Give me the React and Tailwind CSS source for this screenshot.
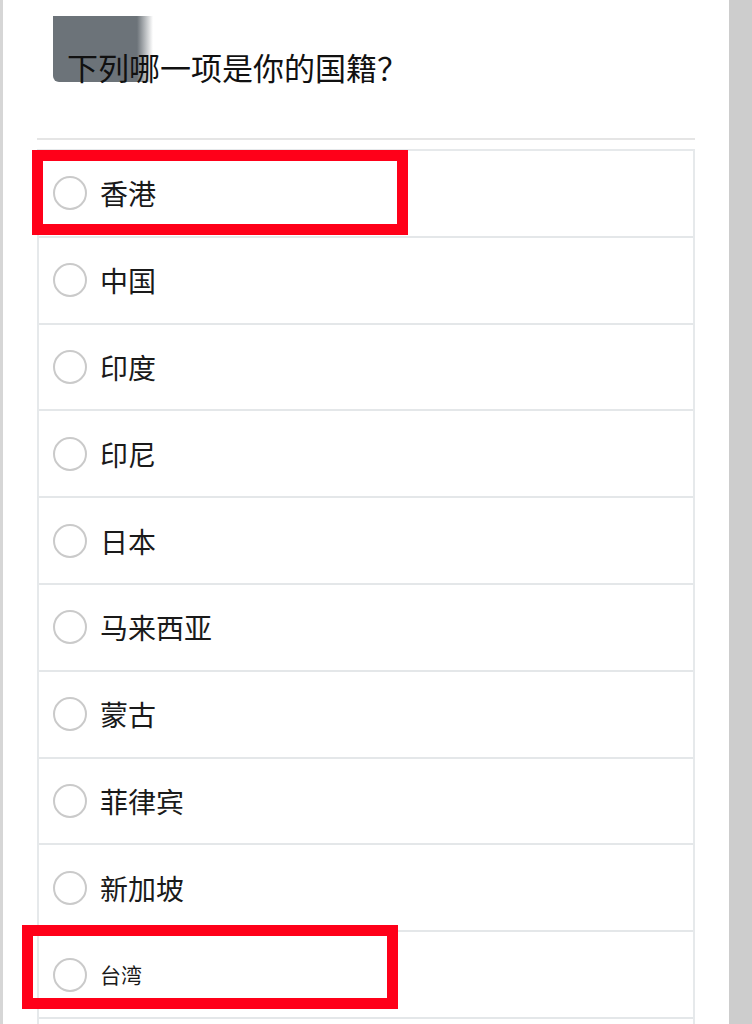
const options = ['香港', '中国', '印度', '印尼', '日本', '马来西亚', '蒙古', '菲律宾', '新加坡', '台湾', ''];

function Row({ label, small }) {
    return (
        <div className="box-border flex h-[86.8px] shrink-0 items-center border-b-2 border-[#e4e7e9] pl-[14px]">
            <div className="h-[34px] w-[34px] shrink-0 rounded-full border-2 border-[#cacaca]" />
            <span className={`ml-[13px] text-[#1a1a1a] ${small ? 'text-[21px]' : 'text-[28px]'}`}>{label}</span>
        </div>
    );
}

export default function App() {
    return (
        <div
            className="relative flex h-[1024px] w-[752px] overflow-hidden bg-white"
            style={{ fontFamily: '"Noto Sans CJK SC", "Noto Sans", sans-serif' }}
        >
            <div className="w-[3px] shrink-0 bg-[#d6d6d6]" />

            <div className="flex min-w-0 flex-1 flex-col px-[34px]">
                <div className="relative h-[138px] shrink-0">
                    <div className="absolute left-[16px] top-[16px] h-[66px] w-[100px] rounded-bl-[6px] bg-[linear-gradient(90deg,#6c7379_84%,rgba(108,115,121,0))]" />
                    <h1 className="relative pl-[30px] pt-[51px] text-[31px] font-normal leading-[31px] text-[#111]">
                        下列哪一项是你的国籍？
                    </h1>
                </div>
                <div className="h-[2px] shrink-0 bg-[#e5e5e5]" />

                <div className="mt-[9px] flex flex-col border-x-2 border-t-2 border-[#e6e9eb]">
                    {options.map((o, i) => (
                        <Row key={i} label={o} small={o === '台湾'} />
                    ))}
                </div>
            </div>

            <div className="w-[23px] shrink-0 bg-[#cdcdcd]" />

            <div className="pointer-events-none absolute left-[32px] top-[150px] h-[85px] w-[376px] border-[11px] border-[#ff0019]" />
            <div className="pointer-events-none absolute left-[22px] top-[925px] h-[84px] w-[376px] border-[11px] border-[#ff0019]" />
        </div>
    );
}
